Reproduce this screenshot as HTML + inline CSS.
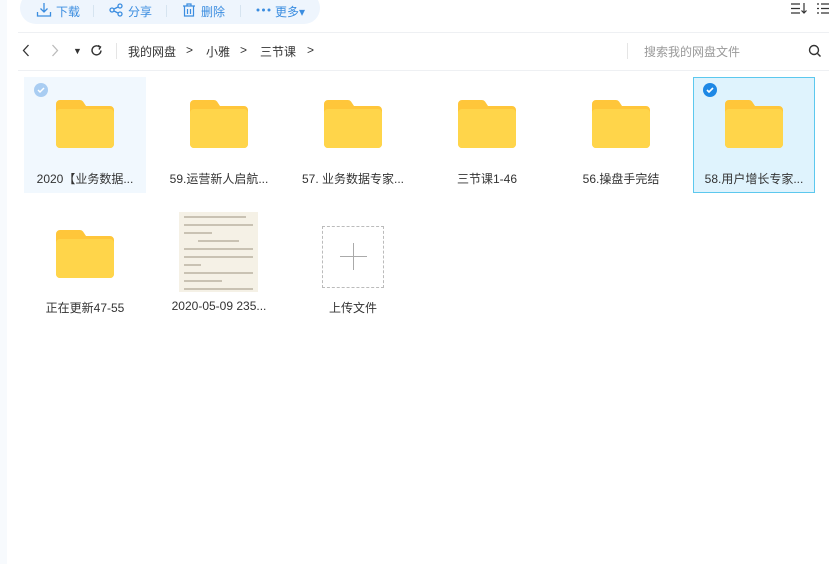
<!DOCTYPE html>
<html><head><meta charset="utf-8"><style>
*{margin:0;padding:0;box-sizing:border-box}
body{width:829px;height:564px;overflow:hidden;background:#fff;font-family:"Liberation Sans","Noto Sans CJK SC",sans-serif;position:relative;color:#333}
.abs{position:absolute}
.tb{left:20px;top:-8px;width:300px;height:32px;background:#eef5fd;border-radius:16px}
.tbt{top:3px;font-size:12px;color:#3b8de0}
.sep{width:1px;height:12px;background:#d6e4f0;top:5px}
.line{left:18px;right:0;height:1px;background:#eef0f3}
.nav{top:43px;font-size:12px;color:#333}
.item{width:122px;height:116px;text-align:center}
.lbl{position:absolute;left:0;right:0;font-size:12px;color:#333}
.thumb{left:179px;top:212px;width:79px;height:80px;background:#f5f1e6;padding:4px 5px;overflow:hidden}
.thumb div{height:2px;background:#c9c2b3;margin:6px 0;}
</style></head><body>
<div class="abs" style="left:0;top:0;width:7px;height:564px;background:#f7fafd"></div>
<div class="abs tb"></div>
<svg class="abs" style="left:36px;top:2px" width="16" height="16" viewBox="0 0 16 16" fill="none" stroke="#3b8de0" stroke-width="1.3"><path d="M8 1v9M4.5 6.5L8 10l3.5-3.5M1.5 10v4h13v-4"/></svg>
<div class="abs tbt" style="left:56px">下载</div>
<div class="abs sep" style="left:93px"></div>
<svg class="abs" style="left:109px;top:3px" width="15" height="14" viewBox="0 0 15 14" fill="none" stroke="#3b8de0" stroke-width="1.3"><circle cx="3" cy="7" r="2"/><circle cx="11" cy="3" r="2"/><circle cx="11" cy="11" r="2"/><path d="M5 6l4-2M5 8l4 2"/></svg>
<div class="abs tbt" style="left:128px">分享</div>
<div class="abs sep" style="left:166px"></div>
<svg class="abs" style="left:182px;top:3px" width="14" height="14" viewBox="0 0 14 14" fill="none" stroke="#3b8de0" stroke-width="1.2"><path d="M1 3h12M5 3V1h4v2M2.5 3v10h9V3M5.5 6v5M8.5 6v5"/></svg>
<div class="abs tbt" style="left:201px">删除</div>
<div class="abs sep" style="left:240px"></div>
<svg class="abs" style="left:256px;top:8px" width="15" height="4"><circle cx="2" cy="2" r="1.5" fill="#3b8de0"/><circle cx="7.5" cy="2" r="1.5" fill="#3b8de0"/><circle cx="13" cy="2" r="1.5" fill="#3b8de0"/></svg>
<div class="abs tbt" style="left:275px">更多▾</div>
<svg class="abs" style="left:791px;top:2px" width="16" height="13" fill="none" stroke="#333" stroke-width="1.2"><path d="M0 2h9M0 6.5h9M0 11h9M13 1v10M10.5 8.5L13 11l2.5-2.5"/></svg>
<svg class="abs" style="left:817px;top:2px" width="12" height="13" fill="none" stroke="#333" stroke-width="1.2"><path d="M0 2h2M0 6.5h2M0 11h2M4 2h8M4 6.5h8M4 11h8"/></svg>
<div class="abs line" style="top:32px"></div>
<svg class="abs" style="left:22px;top:44px" width="8" height="13" fill="none" stroke="#333" stroke-width="1.3"><path d="M6.5 1L1.5 6.5l5 5.5"/></svg>
<svg class="abs" style="left:51px;top:44px" width="8" height="13" fill="none" stroke="#bbb" stroke-width="1.3"><path d="M1.5 1l5 5.5-5 5.5"/></svg>
<div class="abs nav" style="left:73px;font-size:9px;top:46px">▼</div>
<svg class="abs" style="left:90px;top:44px" width="13" height="13" fill="none" stroke="#333" stroke-width="1.4"><path d="M11 6.5A4.5 4.5 0 1 1 9.5 3"/><path d="M8 1.5l2.5 1.5-1.5 2.5" /></svg>
<div class="abs" style="left:116px;top:43px;width:1px;height:16px;background:#e5e5e5"></div>
<div class="abs nav" style="left:128px">我的网盘</div>
<div class="abs nav" style="left:186px">&gt;</div>
<div class="abs nav" style="left:206px">小雅</div>
<div class="abs nav" style="left:240px">&gt;</div>
<div class="abs nav" style="left:260px">三节课</div>
<div class="abs nav" style="left:307px">&gt;</div>
<div class="abs" style="left:627px;top:43px;width:1px;height:16px;background:#e5e5e5"></div>
<div class="abs nav" style="left:644px;color:#999">搜索我的网盘文件</div>
<svg class="abs" style="left:808px;top:44px" width="14" height="14" viewBox="0 0 14 14" fill="none" stroke="#333" stroke-width="1.4"><circle cx="6" cy="6" r="4.5"/><path d="M9.5 9.5l3 3"/></svg>
<div class="abs line" style="top:70px"></div>

<div class="abs" style="left:24px;top:77px;width:122px;height:116px;background:#f1f8fe"></div>
<div class="abs" style="left:34px;top:83px;width:14px;height:14px;border-radius:50%;background:#a9cdf2"><svg width="14" height="14" viewBox="0 0 14 14"><path d="M4 7l2 2 4-4" stroke="#fff" stroke-width="1.5" fill="none"/></svg></div>
<div class="abs" style="left:693px;top:77px;width:122px;height:116px;background:#dff3fd;border:1px solid #5cc8ee"></div>
<div class="abs" style="left:703px;top:83px;width:14px;height:14px;border-radius:50%;background:#1e88e5"><svg width="14" height="14" viewBox="0 0 14 14"><path d="M4 7l2 2 4-4" stroke="#fff" stroke-width="1.6" fill="none"/></svg></div>

<svg width="0" height="0" style="position:absolute"><defs><g id="f"><path d="M0 4a4 4 0 0 1 4-4h20a4 4 0 0 1 3 1.5L30 6H54a4 4 0 0 1 4 4v34a4 4 0 0 1-4 4H4a4 4 0 0 1-4-4z" fill="#ffc63a"/><rect x="0" y="9" width="58" height="39" rx="4" fill="#ffd54a"/></g></defs></svg>
<svg class="abs" style="left:56px;top:100px" width="58" height="48"><use href="#f"/></svg>
<svg class="abs" style="left:190px;top:100px" width="58" height="48"><use href="#f"/></svg>
<svg class="abs" style="left:324px;top:100px" width="58" height="48"><use href="#f"/></svg>
<svg class="abs" style="left:458px;top:100px" width="58" height="48"><use href="#f"/></svg>
<svg class="abs" style="left:592px;top:100px" width="58" height="48"><use href="#f"/></svg>
<svg class="abs" style="left:725px;top:100px" width="58" height="48"><use href="#f"/></svg>
<svg class="abs" style="left:56px;top:230px" width="58" height="48"><use href="#f"/></svg>

<div class="abs item" style="left:24px;top:170px"><div class="lbl">2020【业务数据...</div></div>
<div class="abs item" style="left:158px;top:170px"><div class="lbl">59.运营新人启航...</div></div>
<div class="abs item" style="left:292px;top:170px"><div class="lbl">57. 业务数据专家...</div></div>
<div class="abs item" style="left:426px;top:170px"><div class="lbl">三节课1-46</div></div>
<div class="abs item" style="left:560px;top:170px"><div class="lbl">56.操盘手完结</div></div>
<div class="abs item" style="left:693px;top:170px"><div class="lbl">58.用户增长专家...</div></div>
<div class="abs item" style="left:24px;top:299px"><div class="lbl">正在更新47-55</div></div>
<div class="abs item" style="left:158px;top:299px"><div class="lbl">2020-05-09 235...</div></div>
<div class="abs item" style="left:292px;top:299px"><div class="lbl">上传文件</div></div>

<div class="abs thumb"><div style="width:90%;margin-top:0"></div><div></div><div style="width:40%"></div><div style="width:60%;margin-left:20%"></div><div></div><div></div><div style="width:25%"></div><div></div><div style="width:55%"></div><div></div></div>
<div class="abs" style="left:322px;top:226px;width:62px;height:62px;border:1px dashed #bbb"></div>
<div class="abs" style="left:340px;top:256px;width:27px;height:1px;background:#aaa"></div>
<div class="abs" style="left:353px;top:243px;width:1px;height:27px;background:#aaa"></div>
</body></html>
